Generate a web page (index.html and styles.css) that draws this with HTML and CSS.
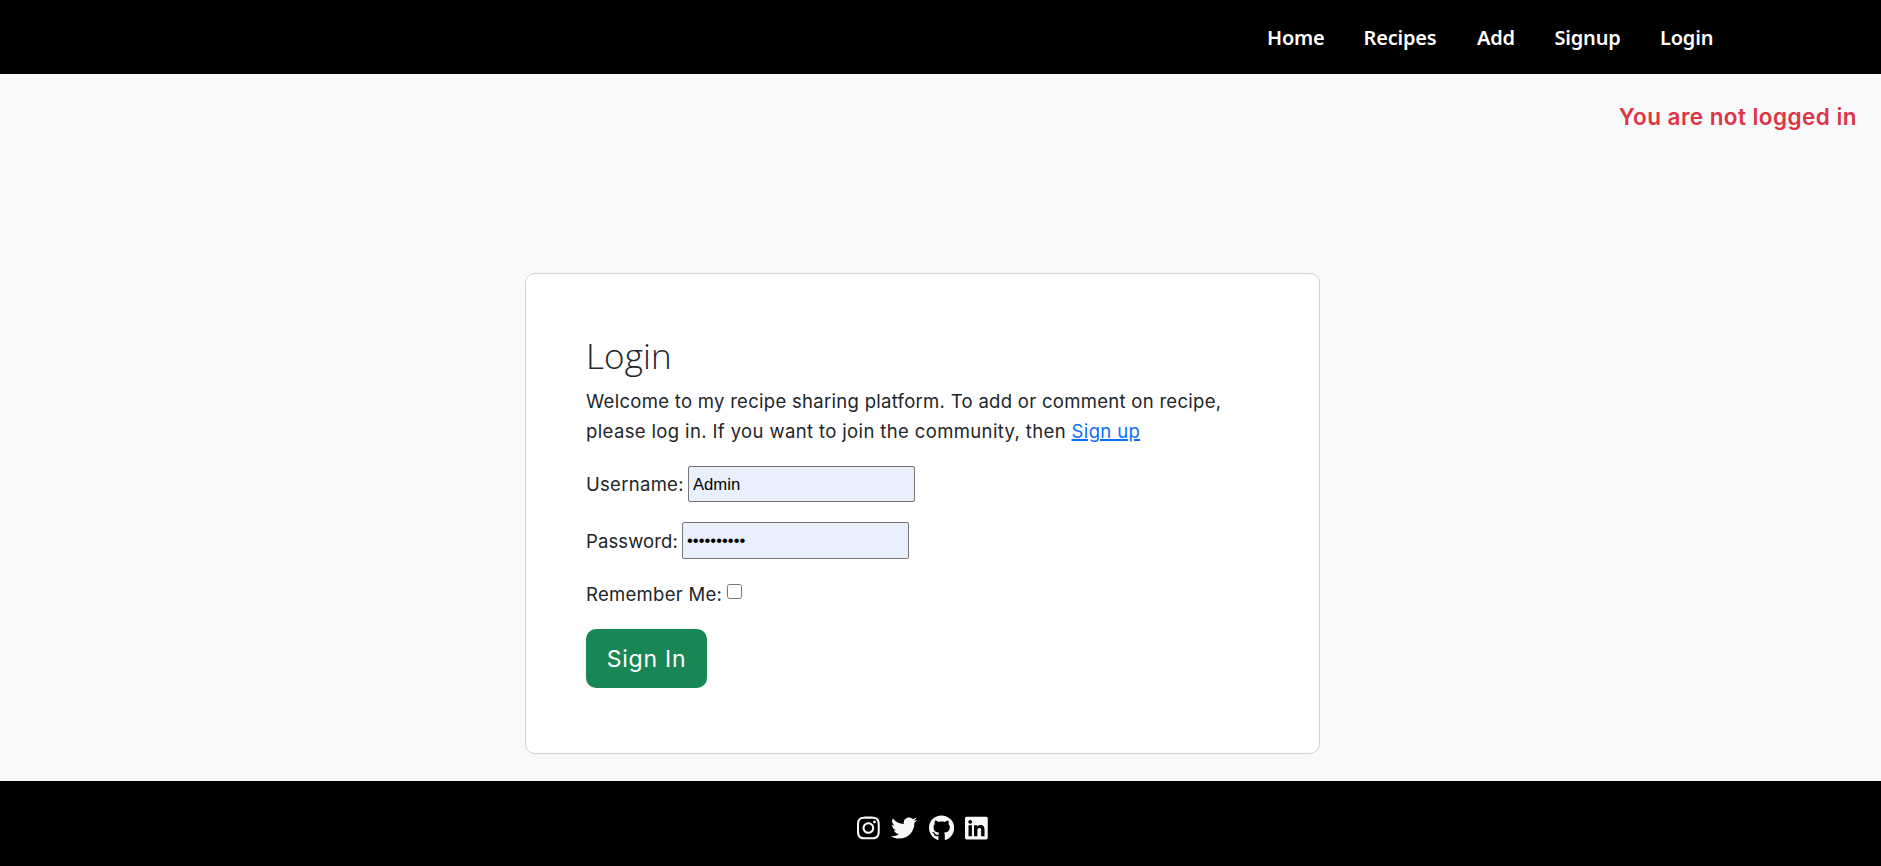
FILE: index.html
```html
<!DOCTYPE html>
<html lang="en">
<head>
<meta charset="utf-8">
<title>Login</title>
<link rel="stylesheet" href="styles.css">
</head>
<body>
<header class="site-header">
  <nav>
    <ul class="nav-list">
      <li><a href="#">Home</a></li>
      <li><a href="#">Recipes</a></li>
      <li><a href="#">Add</a></li>
      <li><a href="#">Signup</a></li>
      <li><a href="#">Login</a></li>
    </ul>
  </nav>
</header>
<main class="page">
  <p class="status">You are not logged in</p>
  <section class="card">
    <h1>Login</h1>
    <p class="intro">Welcome to my recipe sharing platform. To add or comment on recipe,<br><span class="second">please log in. If you want to join the community, then <a href="#">Sign up</a></span></p>
    <form>
      <div class="field"><label for="user">Username:</label><input class="text-input" id="user" type="text" value="Admin"></div>
      <div class="field password"><label for="pass">Password:</label><input class="text-input" id="pass" type="password" value="recipebook"></div>
      <div class="remember"><label for="remember">Remember Me:</label><input class="check" id="remember" type="checkbox"></div>
      <button class="submit" type="button">Sign In</button>
    </form>
  </section>
</main>
<footer class="site-footer">
  <svg viewBox="0 0 448 512"><path d="M224.1 141c-63.6 0-114.9 51.3-114.9 114.9s51.3 114.9 114.9 114.9S339 319.500 339 255.900 287.700 141 224.100 141zm0 189.600c-41.100 0-74.700-33.500-74.700-74.700s33.500-74.700 74.700-74.700 74.700 33.500 74.700 74.700-33.600 74.700-74.700 74.700zm146.400-194.300c0 14.900-12 26.800-26.800 26.800-14.900 0-26.800-12-26.800-26.800s12-26.800 26.800-26.800 26.800 12 26.800 26.800zm76.100 27.200c-1.700-35.900-9.900-67.700-36.200-93.900-26.200-26.200-58-34.400-93.900-36.200-37-2.100-147.900-2.100-184.900 0-35.800 1.700-67.600 9.900-93.900 36.100s-34.400 58-36.200 93.900c-2.100 37-2.100 147.900 0 184.900 1.700 35.900 9.900 67.700 36.200 93.900s58 34.400 93.900 36.200c37 2.100 147.900 2.100 184.900 0 35.900-1.700 67.700-9.900 93.900-36.200 26.200-26.200 34.400-58 36.200-93.900 2.100-37 2.100-147.800 0-184.800zM398.800 388c-7.800 19.600-22.900 34.700-42.600 42.600-29.500 11.700-99.500 9-132.100 9s-102.700 2.600-132.100-9c-19.600-7.800-34.700-22.900-42.600-42.600-11.700-29.500-9-99.500-9-132.100s-2.600-102.700 9-132.100c7.800-19.600 22.900-34.700 42.600-42.600 29.500-11.700 99.500-9 132.100-9s102.700-2.600 132.100 9c19.600 7.800 34.700 22.900 42.600 42.600 11.700 29.500 9 99.500 9 132.100s2.700 102.700-9 132.100z"/></svg>
  <svg viewBox="0 0 512 512"><path d="M459.370 151.716c.325 4.548.325 9.097.325 13.645 0 138.720-105.583 298.558-298.558 298.558-59.452 0-114.680-17.219-161.137-47.106 8.447.974 16.568 1.299 25.340 1.299 49.055 0 94.213-16.568 130.274-44.832-46.132-.975-84.792-31.188-98.112-72.772 6.498.974 12.995 1.624 19.818 1.624 9.421 0 18.843-1.300 27.614-3.573-48.081-9.747-84.143-51.980-84.143-102.985v-1.299c13.969 7.797 30.214 12.670 47.431 13.319-28.264-18.843-46.781-51.005-46.781-87.391 0-19.492 5.197-37.360 14.294-52.954 51.655 63.675 129.300 105.258 216.365 109.807-1.624-7.797-2.599-15.918-2.599-24.040 0-57.828 46.782-104.934 104.934-104.934 30.213 0 57.502 12.670 76.670 33.137 23.715-4.548 46.456-13.320 66.599-25.340-7.798 24.366-24.366 44.833-46.132 57.827 21.117-2.273 41.584-8.122 60.426-16.243-14.292 20.791-32.161 39.308-52.628 54.253z"/></svg>
  <svg viewBox="0 0 496 512"><path d="M165.900 397.400c0 2-2.300 3.600-5.200 3.600-3.300.3-5.600-1.300-5.600-3.600 0-2 2.300-3.600 5.200-3.600 3-.3 5.600 1.300 5.600 3.600zm-31.100-4.500c-.7 2 1.300 4.300 4.300 4.900 2.600 1 5.600 0 6.200-2s-1.300-4.300-4.300-5.200c-2.600-.7-5.500.3-6.200 2.300zm44.200-1.700c-2.900.7-4.900 2.600-4.600 4.900.3 2 2.900 3.300 5.900 2.600 2.900-.7 4.900-2.600 4.600-4.600-.3-1.900-3-3.200-5.900-2.900zM244.800 8C106.100 8 0 113.300 0 252c0 110.900 69.800 205.800 169.500 239.200 12.800 2.300 17.300-5.600 17.300-12.100 0-6.200-.3-40.400-.3-61.400 0 0-70 15-84.700-29.800 0 0-11.400-29.100-27.800-36.600 0 0-22.900-15.700 1.600-15.400 0 0 24.900 2 38.600 25.800 21.900 38.600 58.600 27.500 72.900 20.900 2.300-16 8.800-27.100 16-33.700-55.900-6.200-112.300-14.300-112.300-110.500 0-27.500 7.600-41.300 23.600-58.900-2.600-6.500-11.100-33.300 2.600-67.900 20.900-6.500 69 27 69 27 20-5.600 41.500-8.500 62.800-8.500s42.800 2.900 62.800 8.500c0 0 48.100-33.600 69-27 13.700 34.700 5.200 61.400 2.600 67.900 16 17.700 25.800 31.500 25.800 58.900 0 96.500-58.900 104.200-114.800 110.500 9.200 7.900 17 22.900 17 46.400 0 33.700-.3 75.400-.3 83.600 0 6.500 4.600 14.400 17.300 12.100C428.200 457.800 496 362.900 496 252 496 113.300 383.500 8 244.800 8z"/></svg>
  <svg viewBox="0 0 448 512"><path d="M416 32H31.900C14.300 32 0 46.500 0 64.300v383.400C0 465.500 14.300 480 31.900 480H416c17.600 0 32-14.500 32-32.300V64.300c0-17.800-14.400-32.300-32-32.300zM135.400 416H69V202.200h66.500V416zm-33.200-243c-21.300 0-38.500-17.300-38.500-38.500S80.900 96 102.200 96c21.200 0 38.500 17.300 38.500 38.500 0 21.300-17.200 38.500-38.500 38.500zm282.100 243h-66.400V312c0-24.800-.5-56.700-34.500-56.700-34.600 0-39.900 27-39.900 54.900V416h-66.400V202.200h63.700v29.200h.9c8.900-16.800 30.600-34.500 62.900-34.500 67.200 0 79.700 44.300 79.700 101.900V416z"/></svg>
</footer>
</body>
</html>
```
FILE: styles.css
```css
* { box-sizing: border-box; }
body {
  margin: 0;
  height: 866px;
  display: flex;
  flex-direction: column;
  background: #f8f9fb;
  color: #212529;
  font: 18.500px/30px Inter, "Liberation Sans", sans-serif;
  letter-spacing: .29px;
}
h1, p, ul { margin: 0; padding: 0; }
.site-header {
  height: 74px;
  padding: 2px 167px 0 0;
  display: flex;
  align-items: center;
  justify-content: flex-end;
  background: #000;
}
.nav-list {
  list-style: none;
  display: grid;
  grid-template-columns: 96.500px 113.500px 77.500px 105.500px 54px;
  font: 600 20px/30px "Noto Sans", sans-serif;
  letter-spacing: -.2px;
}
.nav-list a { color: #fff; text-decoration: none; }
.page {
  flex: 1;
  display: flex;
  flex-direction: column;
  align-items: flex-start;
}
.status {
  align-self: flex-end;
  margin: 28px 24px 0 0;
  font-size: 22.500px;
  font-weight: 600;
  letter-spacing: .45px;
  color: #dc3545;
}
.card {
  width: 795px;
  height: 481px;
  margin: 141px 0 0 525px;
  padding: 61px 60px 60px;
  background: #fff;
  border: 1px solid #d0d2d4;
  border-radius: 10px;
}
h1 {
  margin-bottom: 9px;
  font: 350 35px/42px "Open Sans", sans-serif;
  letter-spacing: .1px;
}
.intro { margin-bottom: 20px; white-space: nowrap; }
.second { letter-spacing: .37px; }
.intro a { color: #0d6efd; text-decoration-thickness: 2px; }
.field {
  display: flex;
  align-items: center;
  gap: 4px;
  height: 36px;
  margin-bottom: 20px;
}
.field label { flex: 0 0 98px; }
.password { height: 37px; }
.password label { flex-basis: 92px; letter-spacing: .1px; }
.text-input {
  width: 227px;
  height: 100%;
  padding: 2px 4px 1px;
  border: 1px solid #767676;
  border-radius: 2px;
  background: #e8f0fe;
  color: #000;
  font: 16.670px "Liberation Sans", sans-serif;
}
.remember {
  display: flex;
  align-items: center;
  height: 30px;
  margin-bottom: 20px;
}
.remember label { flex: 0 0 141px; }
.check { width: 15px; height: 15px; margin: 0 0 5px; }
.submit {
  display: block;
  width: 121px;
  height: 59px;
  padding: 0;
  border: 0;
  border-radius: 10px;
  background: #198754;
  color: #fff;
  font: 23px/30px Inter, sans-serif;
  letter-spacing: .75px;
}
.site-footer {
  height: 85px;
  padding: 8px 36px 0 0;
  display: flex;
  align-items: center;
  justify-content: center;
  gap: 11.500px;
  background: #000;
}
.site-footer svg { height: 26px; fill: #f8f9fa; }
```
